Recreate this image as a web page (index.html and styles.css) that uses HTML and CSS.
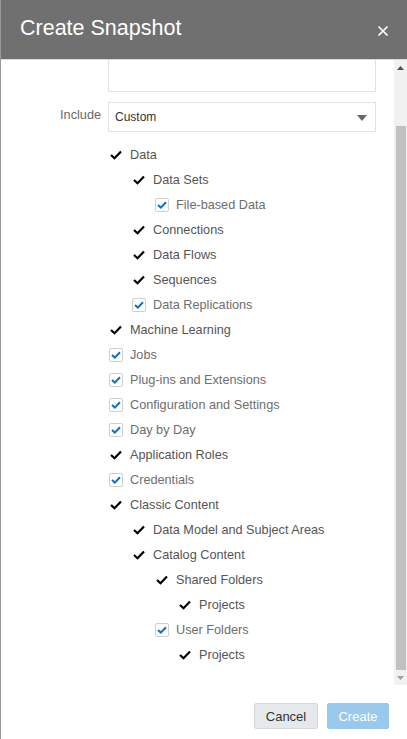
FILE: index.html
```html
<!DOCTYPE html>
<html>
<head>
<meta charset="utf-8">
<link rel="stylesheet" href="styles.css">
</head>
<body>
<div class="dialog">
  <div class="header">
    <div class="title">Create Snapshot</div>
    <svg class="close" width="12" height="12" viewBox="0 0 12 12"><path d="M1.5 1.5 L10.5 10.5 M10.5 1.5 L1.5 10.5" stroke="#fff" stroke-width="1.7" fill="none"/></svg>
  </div>
  <div class="body">
    <div class="content">
      <div class="form-row">
        <div class="label"></div>
        <div class="textarea"></div>
      </div>
      <div class="form-row include-row">
        <div class="label">Include</div>
        <div class="select">
          <span>Custom</span>
          <svg width="10" height="6" viewBox="0 0 10 6"><path d="M0 0 L10 0 L5 6 Z" fill="#666"/></svg>
        </div>
      </div>
      <ul class="tree">
        <li class="row l0 ck"><span class="ico"><svg width="12" height="10" viewBox="0 0 12 10"><path d="M1 5 L4.5 8.3 L11 1.5" stroke="#000" stroke-width="2.2" fill="none"/></svg></span>Data</li>
        <li class="row l1 ck"><span class="ico"><svg width="12" height="10" viewBox="0 0 12 10"><path d="M1 5 L4.5 8.3 L11 1.5" stroke="#000" stroke-width="2.2" fill="none"/></svg></span>Data Sets</li>
        <li class="row l2 bx"><span class="ico box"><svg width="10" height="8" viewBox="0 0 10 8"><path d="M1 4 L3.8 6.6 L9 1.2" stroke="#0a72c8" stroke-width="2" fill="none"/></svg></span>File-based Data</li>
        <li class="row l1 ck"><span class="ico"><svg width="12" height="10" viewBox="0 0 12 10"><path d="M1 5 L4.5 8.3 L11 1.5" stroke="#000" stroke-width="2.2" fill="none"/></svg></span>Connections</li>
        <li class="row l1 ck"><span class="ico"><svg width="12" height="10" viewBox="0 0 12 10"><path d="M1 5 L4.5 8.3 L11 1.5" stroke="#000" stroke-width="2.2" fill="none"/></svg></span>Data Flows</li>
        <li class="row l1 ck"><span class="ico"><svg width="12" height="10" viewBox="0 0 12 10"><path d="M1 5 L4.5 8.3 L11 1.5" stroke="#000" stroke-width="2.2" fill="none"/></svg></span>Sequences</li>
        <li class="row l1 bx"><span class="ico box"><svg width="10" height="8" viewBox="0 0 10 8"><path d="M1 4 L3.8 6.6 L9 1.2" stroke="#0a72c8" stroke-width="2" fill="none"/></svg></span>Data Replications</li>
        <li class="row l0 ck"><span class="ico"><svg width="12" height="10" viewBox="0 0 12 10"><path d="M1 5 L4.5 8.3 L11 1.5" stroke="#000" stroke-width="2.2" fill="none"/></svg></span>Machine Learning</li>
        <li class="row l0 bx"><span class="ico box"><svg width="10" height="8" viewBox="0 0 10 8"><path d="M1 4 L3.8 6.6 L9 1.2" stroke="#0a72c8" stroke-width="2" fill="none"/></svg></span>Jobs</li>
        <li class="row l0 bx"><span class="ico box"><svg width="10" height="8" viewBox="0 0 10 8"><path d="M1 4 L3.8 6.6 L9 1.2" stroke="#0a72c8" stroke-width="2" fill="none"/></svg></span>Plug-ins and Extensions</li>
        <li class="row l0 bx"><span class="ico box"><svg width="10" height="8" viewBox="0 0 10 8"><path d="M1 4 L3.8 6.6 L9 1.2" stroke="#0a72c8" stroke-width="2" fill="none"/></svg></span>Configuration and Settings</li>
        <li class="row l0 bx"><span class="ico box"><svg width="10" height="8" viewBox="0 0 10 8"><path d="M1 4 L3.8 6.6 L9 1.2" stroke="#0a72c8" stroke-width="2" fill="none"/></svg></span>Day by Day</li>
        <li class="row l0 ck"><span class="ico"><svg width="12" height="10" viewBox="0 0 12 10"><path d="M1 5 L4.5 8.3 L11 1.5" stroke="#000" stroke-width="2.2" fill="none"/></svg></span>Application Roles</li>
        <li class="row l0 bx"><span class="ico box"><svg width="10" height="8" viewBox="0 0 10 8"><path d="M1 4 L3.8 6.6 L9 1.2" stroke="#0a72c8" stroke-width="2" fill="none"/></svg></span>Credentials</li>
        <li class="row l0 ck"><span class="ico"><svg width="12" height="10" viewBox="0 0 12 10"><path d="M1 5 L4.5 8.3 L11 1.5" stroke="#000" stroke-width="2.2" fill="none"/></svg></span>Classic Content</li>
        <li class="row l1 ck"><span class="ico"><svg width="12" height="10" viewBox="0 0 12 10"><path d="M1 5 L4.5 8.3 L11 1.5" stroke="#000" stroke-width="2.2" fill="none"/></svg></span>Data Model and Subject Areas</li>
        <li class="row l1 ck"><span class="ico"><svg width="12" height="10" viewBox="0 0 12 10"><path d="M1 5 L4.5 8.3 L11 1.5" stroke="#000" stroke-width="2.2" fill="none"/></svg></span>Catalog Content</li>
        <li class="row l2 ck"><span class="ico"><svg width="12" height="10" viewBox="0 0 12 10"><path d="M1 5 L4.5 8.3 L11 1.5" stroke="#000" stroke-width="2.2" fill="none"/></svg></span>Shared Folders</li>
        <li class="row l3 ck"><span class="ico"><svg width="12" height="10" viewBox="0 0 12 10"><path d="M1 5 L4.5 8.3 L11 1.5" stroke="#000" stroke-width="2.2" fill="none"/></svg></span>Projects</li>
        <li class="row l2 bx"><span class="ico box"><svg width="10" height="8" viewBox="0 0 10 8"><path d="M1 4 L3.8 6.6 L9 1.2" stroke="#0a72c8" stroke-width="2" fill="none"/></svg></span>User Folders</li>
        <li class="row l3 ck"><span class="ico"><svg width="12" height="10" viewBox="0 0 12 10"><path d="M1 5 L4.5 8.3 L11 1.5" stroke="#000" stroke-width="2.2" fill="none"/></svg></span>Projects</li>
      </ul>
    </div>
    <div class="scrollbar">
      <div class="sb-btn"><svg width="7" height="4" viewBox="0 0 7 4"><path d="M0 4 L3.5 0 L7 4 Z" fill="#505050"/></svg></div>
      <div class="thumb"></div>
      <div class="sb-btn"><svg width="7" height="4" viewBox="0 0 7 4"><path d="M0 0 L7 0 L3.5 4 Z" fill="#a0a0a0"/></svg></div>
    </div>
  </div>
  <div class="footer">
    <button class="btn cancel">Cancel</button>
    <button class="btn create">Create</button>
  </div>
</div>
</body>
</html>
```
FILE: styles.css
```css
html, body {
  margin: 0;
  padding: 0;
  background: #fff;
}
body {
  font-family: "Liberation Sans", Arial, sans-serif;
}
.dialog {
  width: 407px;
  height: 739px;
  display: flex;
  flex-direction: column;
  box-sizing: border-box;
  border-left: 1px solid #9a9a9a;
  overflow: hidden;
}
.header {
  height: 59px;
  flex: none;
  background: #707070;
  display: flex;
  align-items: center;
  justify-content: space-between;
  padding: 0 18px 0 19px;
  border-bottom: 1px solid #d8d8d8;
}
.title {
  color: #fff;
  font-size: 21.5px;
  margin-top: -3px;
}
.close {
  margin-top: 3px;
}
.body {
  height: 625px;
  flex: none;
  display: flex;
  overflow: hidden;
}
.content {
  flex: 1;
}
.form-row {
  display: flex;
  gap: 7px;
  align-items: center;
}
.label {
  width: 100px;
  text-align: right;
  color: #6a6a6a;
  font-size: 12.7px;
  margin-top: -4px;
}
.textarea {
  width: 268px;
  height: 32px;
  box-sizing: border-box;
  border: 1px solid #e2e2e2;
  border-top: none;
}
.include-row {
  margin-top: 10px;
}
.select {
  width: 268px;
  height: 30px;
  box-sizing: border-box;
  border: 1px solid #e2e2e2;
  display: flex;
  align-items: center;
  justify-content: space-between;
  padding: 0 8px 0 6px;
  font-size: 12px;
  color: #333;
}
.select svg {
  margin-top: 1px;
}
.tree {
  list-style: none;
  margin: 10px 0 0 0;
  padding: 0;
}
.row {
  height: 25px;
  display: flex;
  align-items: center;
  font-size: 12.7px;
  color: #555;
}
.row.bx {
  color: #6e6e6e;
}
.l0 { padding-left: 108px; }
.l1 { padding-left: 131px; }
.l2 { padding-left: 154px; }
.l3 { padding-left: 177px; }
.ico {
  width: 14px;
  height: 14px;
  margin-right: 7px;
  display: flex;
  align-items: center;
  justify-content: center;
  box-sizing: border-box;
}
.ico.box {
  border: 1px solid #cfcfcf;
  border-radius: 2px;
  background: #fff;
}
.scrollbar {
  width: 13px;
  flex: none;
  background: #f1f1f1;
  display: flex;
  flex-direction: column;
}
.sb-btn {
  height: 15px;
  flex: none;
  display: flex;
  align-items: center;
  justify-content: center;
}
.thumb {
  flex: 1;
  margin: 51px 1px 0 2px;
  background: #c1c1c1;
}
.footer {
  flex: 1;
  display: flex;
  justify-content: flex-end;
  align-items: flex-start;
  gap: 9px;
  padding: 18px 18px 0 0;
}
.btn {
  height: 26px;
  font-family: "Liberation Sans", Arial, sans-serif;
  font-size: 13px;
  border-radius: 2px;
  padding: 0;
  cursor: pointer;
}
.cancel {
  width: 64px;
  background: #e6e9ec;
  border: 1px solid #d3d7db;
  color: #333;
}
.create {
  width: 62px;
  background: #99c9ec;
  border: 1px solid #99c9ec;
  color: #fff;
}
```
